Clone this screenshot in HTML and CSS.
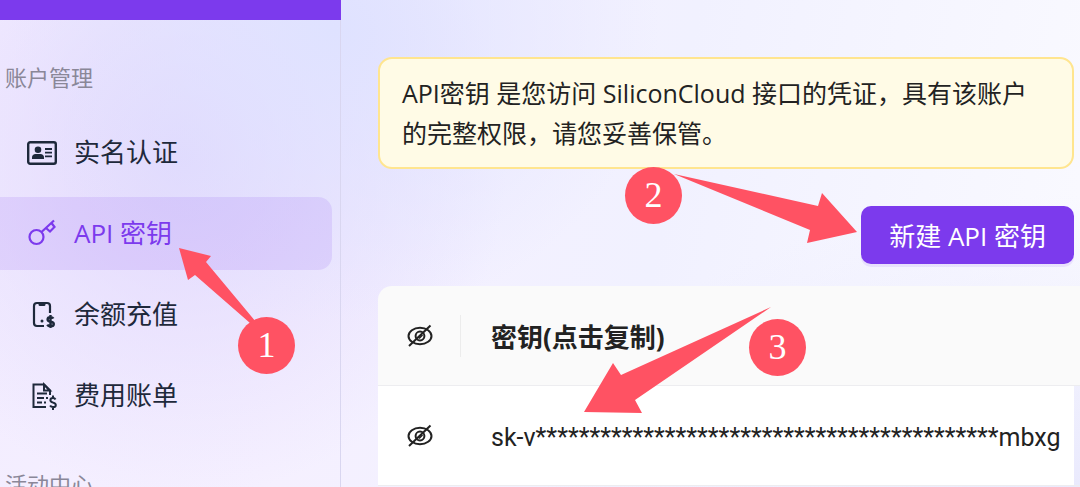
FILE: index.html
```html
<!DOCTYPE html>
<html lang="zh-CN">
<head>
    <meta charset="UTF-8">
    <meta name="viewport" content="width=device-width, initial-scale=1.0">
    <title>API 密钥</title>
    <link rel="stylesheet" href="styles.css">
</head>
<body>
    <div class="layout">
        <aside class="sidebar">
            <div class="topbar"></div>
            <nav class="menu">
                <h2 class="menu-title">账户管理</h2>
                <a class="menu-item" href="#">
                    <svg class="menu-icon" viewBox="0 0 32 32" fill="none" stroke="currentColor" stroke-width="2.4">
                        <rect x="2.2" y="5.2" width="27.6" height="21.6" rx="2"/>
                        <circle cx="12" cy="12.8" r="3.3" fill="currentColor" stroke="none"/>
                        <path d="M6 22v-1.5c0-2 1.5-3.5 3.5-3.5h5c2 0 3.5 1.5 3.5 3.5V22z" fill="currentColor" stroke="none"/>
                        <path d="M19 12h7M19 15.7h7M19 19.4h7" stroke-width="1.8"/>
                    </svg>
                    <span class="menu-label">实名认证</span>
                </a>
                <a class="menu-item active" href="#">
                    <svg class="menu-icon" viewBox="0 0 32 32" fill="none" stroke="currentColor" stroke-width="2.2">
                        <circle cx="10.5" cy="19" r="7"/>
                        <path d="M15.5 14L28 2.5M20 10l4 3.5 4.5-4.5-3-4"/>
                    </svg>
                    <span class="menu-label">API 密钥</span>
                </a>
                <a class="menu-item" href="#">
                    <svg class="menu-icon" viewBox="0 0 32 32" fill="none" stroke="currentColor" stroke-width="2.2">
                        <path d="M18 27H11a3 3 0 0 1-3-3V7a3 3 0 0 1 3-3h10a3 3 0 0 1 3 3v7"/>
                        <path d="M12.5 4h7v1.500a1.500 1.500 0 0 1-1.500 1.500h-4a1.500 1.500 0 0 1-1.500-1.500z" fill="currentColor" stroke="none"/>
                        <circle cx="16" cy="22" r="1.5" fill="currentColor" stroke="none"/>
                        <path d="M27.400 19.500c-.6-1-1.500-1.300-2.900-1.300-1.600 0-2.900.8-2.900 2.200 0 3.200 6.200 1.500 6.200 4.500 0 1.500-1.500 2.300-3.300 2.300-1.400 0-2.600-.5-3.200-1.600M24.500 16v13" stroke-width="2.400"/>
                    </svg>
                    <span class="menu-label">余额充值</span>
                </a>
                <a class="menu-item" href="#">
                    <svg class="menu-icon" viewBox="0 0 32 32" fill="none" stroke="currentColor" stroke-width="2">
                        <path d="M20 27H7.5V4.5H18l6 6V15"/>
                        <path d="M18 4.5v6h6z"/>
                        <path d="M11 13.5h10M11 18h7M11 22.5h5M18 22.5h2M20 18h2" stroke-width="1.8"/>
                        <path d="M29.500 19.500c-.5-1-1.400-1.400-2.500-1.400-1.600 0-2.600.9-2.600 2.100 0 3 5.400 1.800 5.400 4.700 0 1.400-1.200 2.200-2.800 2.200-1.300 0-2.300-.5-2.900-1.600M27 15.500v3M27 27v3"/>
                    </svg>
                    <span class="menu-label">费用账单</span>
                </a>
                <h2 class="menu-title">活动中心</h2>
            </nav>
        </aside>

        <main class="content">
            <div class="notice">API密钥 是您访问 SiliconCloud 接口的凭证，具有该账户的完整权限，请您妥善保管。</div>
            <div class="toolbar">
                <button class="btn-primary" type="button">新建 API 密钥</button>
            </div>
            <table class="keys">
                <thead>
                    <tr>
                        <th class="col-eye">
                            <button class="eye" type="button" aria-label="显示全部密钥">
                                <svg viewBox="0 0 26 24" fill="none" stroke="currentColor" stroke-width="2">
                                    <ellipse cx="13" cy="12" rx="11.5" ry="8.2"/>
                                    <circle cx="13" cy="12" r="4.4"/>
                                    <path d="M2 22L23.5 1.5"/>
                                    <path d="M12 14.500l3.500-3.500" stroke-width="1.600"/>
                                </svg>
                            </button>
                        </th>
                        <th class="col-key">密钥(点击复制)</th>
                        <th class="col-end"></th>
                    </tr>
                </thead>
                <tbody>
                    <tr>
                        <td class="col-eye">
                            <button class="eye" type="button" aria-label="显示密钥">
                                <svg viewBox="0 0 26 24" fill="none" stroke="currentColor" stroke-width="2">
                                    <ellipse cx="13" cy="12" rx="11.5" ry="8.2"/>
                                    <circle cx="13" cy="12" r="4.4"/>
                                    <path d="M2 22L23.5 1.5"/>
                                    <path d="M12 14.500l3.500-3.500" stroke-width="1.600"/>
                                </svg>
                            </button>
                        </td>
                        <td class="col-key"><button class="key-text" type="button">sk-v*******************************************mbxg</button></td>
                        <td class="col-end"></td>
                    </tr>
                </tbody>
            </table>
        </main>
    </div>

    <!-- step markers drawn over the page -->
    <svg class="arrows" width="1080" height="487" viewBox="0 0 1080 487" fill="#ff5263">
        <path d="M179 248L211 256L206 262L256 322L250 323L195 275L188 280Z"/>
        <path d="M674 174L818 206L822 193L857 232L807 243L810 230Z"/>
        <path d="M771 307L621 375L613 363L584 412L642 413L635 400Z"/>
    </svg>
    <span class="step step-1">1</span>
    <span class="step step-2">2</span>
    <span class="step step-3">3</span>
</body>
</html>
```
FILE: styles.css
```css
* {
    box-sizing: border-box;
}
body {
    margin: 0;
    position: relative;
    height: 100vh;
    overflow: hidden;
    font-family: "Open Sans", "Noto Sans CJK SC", sans-serif;
    font-size: 25px;
    color: #222;
    background:
        radial-gradient(ellipse 30% 60% at 31% 6%, #dfe2ff 0%, rgba(223, 226, 255, 0) 100%),
        radial-gradient(ellipse 30% 70% at 17% 32%, #e1d8fd 0%, rgba(225, 216, 253, 0) 100%),
        radial-gradient(ellipse 50% 60% at 100% 100%, #eaeafd 0%, rgba(234, 234, 253, 0) 100%),
        linear-gradient(100deg, #f3edff 0%, #f5f0ff 30%, #f1f1ff 60%, #fafaff 100%);
}
.layout {
    display: flex;
    height: 100%;
}
.sidebar {
    flex: 0 0 341px;
    border-right: 1px solid #d9d6f0;
}
.topbar {
    height: 20px;
    margin-right: -1px;
    background: #7c3aed;
}
.menu {
    display: flex;
    flex-direction: column;
    gap: 8px;
    padding-top: 41px;
}
.menu-title {
    margin: 0;
    padding-left: 5px;
    height: 47px;
    line-height: 32px;
    font-size: 22px;
    font-weight: 400;
    color: #8a8798;
}
.menu-title:last-child {
    padding-top: 28px;
}
.menu-item {
    display: flex;
    align-items: center;
    gap: 16px;
    height: 73px;
    margin-right: 8px;
    padding-left: 26px;
    border-radius: 0 14px 14px 0;
    font-size: 26px;
    color: #1e293b;
    text-decoration: none;
}
.menu-item.active {
    color: #7c3aed;
    background: rgba(124, 58, 237, 0.12);
}
.menu-icon {
    width: 32px;
    height: 32px;
}
.menu-label {
    padding-bottom: 4px;
}
.content {
    flex: 1;
    min-width: 0;
    padding: 57px 0 0 37px;
}
.notice {
    margin-right: 6px;
    padding: 14px 30px 14px 22px;
    line-height: 40px;
    border: 2px solid #ffe58f;
    border-radius: 14px;
    background: #fffbe6;
}
.toolbar {
    display: flex;
    justify-content: flex-end;
    margin: 37px 6px 22px 0;
}
.btn-primary {
    height: 58px;
    padding: 0 28px;
    border: 0;
    border-radius: 10px;
    font-family: inherit;
    font-size: 26px;
    color: #fff;
    background: #7c3aed;
    box-shadow: 0 3px 0 rgba(124, 58, 237, 0.1);
}
.keys {
    width: 100%;
    border-collapse: separate;
    border-spacing: 0;
}
.keys th,
.keys td {
    height: 100px;
    padding: 0;
    text-align: left;
    border-bottom: 1px solid #ededf0;
}
.keys th {
    font-size: 26px;
    background: #fafafa;
}
.keys td {
    background: #fff;
}
.keys .col-eye {
    width: 83px;
}
.keys th.col-eye {
    border-radius: 14px 0 0 0;
    background: linear-gradient(#ececec, #ececec) right center / 1px 42px no-repeat #fafafa;
}
.keys .col-key {
    padding-left: 30px;
}
.keys .col-end {
    width: 6px;
}
.keys td.col-end {
    background: none;
}
.eye {
    display: block;
    margin: 0 auto;
    padding: 0;
    border: 0;
    color: #222;
    background: none;
}
.eye svg {
    display: block;
    width: 26px;
    height: 24px;
}
.key-text {
    padding: 0;
    border: 0;
    font-family: Roboto, sans-serif;
    font-size: 25px;
    color: #222;
    background: none;
}
.arrows {
    position: absolute;
    top: 0;
    left: 0;
    pointer-events: none;
}
.step {
    position: absolute;
    width: 57px;
    height: 57px;
    border-radius: 50%;
    font-family: "Liberation Serif", serif;
    font-size: 36px;
    line-height: 57px;
    text-align: center;
    color: #fff;
    background: #ff5263;
}
.step-1 {
    left: 238px;
    top: 317px;
}
.step-2 {
    left: 625px;
    top: 167px;
}
.step-3 {
    left: 749px;
    top: 319px;
}
```
